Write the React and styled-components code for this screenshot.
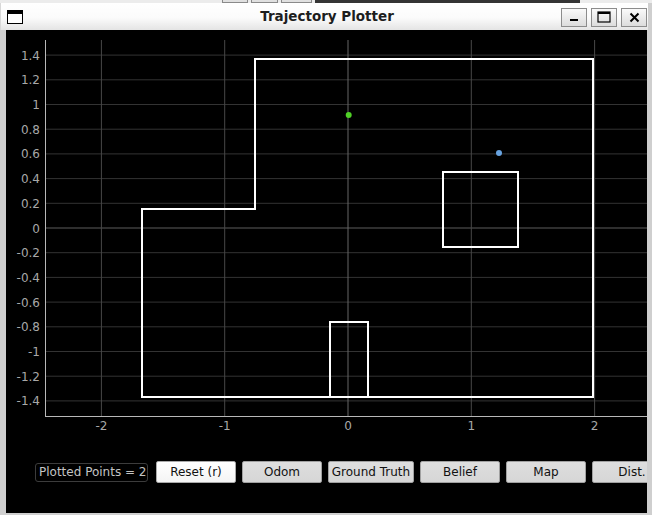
import React from "react";
import styled, { createGlobalStyle } from "styled-components";

const GlobalStyle = createGlobalStyle`
  html, body {
    margin: 0;
    padding: 0;
    background: #cfcfcf;
  }
  body {
    font-family: "DejaVu Sans", "Liberation Sans", sans-serif;
  }
`;

const yTicks = [1.4, 1.2, 1, 0.8, 0.6, 0.4, 0.2, 0, -0.2, -0.4, -0.6, -0.8, -1, -1.2, -1.4];
const xTicks = [-2, -1, 0, 1, 2];

const X0 = 348;
const Y0 = 228;
const SX = 123.3;
const SY = 123.5;
const px = (u) => X0 + u * SX;
const py = (v) => Y0 - v * SY;

const fmt = (v) => {
  const r = Math.round(v * 10) / 10;
  return r === 0 ? "0" : String(r);
};

const buttons = [
  { label: "Reset (r)", primary: true },
  { label: "Odom" },
  { label: "Ground Truth", wide: true },
  { label: "Belief" },
  { label: "Map" },
  { label: "Dist." },
];

function Plot() {
  return (
    <PlotSvg width="641" height="410" viewBox="6 30 641 410">
      {yTicks.map((v) => (
        <line
          key={"h" + v}
          x1="45"
          x2="700"
          y1={py(v)}
          y2={py(v)}
          stroke={v === 0 ? "#5c5c5c" : "#333"}
          strokeWidth="1"
        />
      ))}
      {xTicks.map((u) => (
        <line
          key={"v" + u}
          x1={px(u)}
          x2={px(u)}
          y1="40"
          y2="416"
          stroke={u === 0 ? "#666" : "#484848"}
          strokeWidth="1"
        />
      ))}
      <line x1="45.5" x2="45.5" y1="40" y2="416" stroke="#b8b8b8" />
      <line x1="45" x2="700" y1="416.5" y2="416.5" stroke="#b8b8b8" />

      {yTicks.map((v) => (
        <TickText key={"yl" + v} x="40" y={py(v) + 4.5} textAnchor="end">
          {fmt(v)}
        </TickText>
      ))}
      {xTicks.map((u) => (
        <TickText key={"xl" + u} x={px(u)} y="430" textAnchor="middle">
          {u}
        </TickText>
      ))}

      <g fill="none" stroke="#fff" strokeWidth="2">
        <polygon points="142,209 255,209 255,59 593,59 593,397 142,397" />
        <rect x="443" y="172" width="75" height="75" />
        <polyline points="330,397 330,322 368,322 368,397" />
      </g>

      <circle cx="348.7" cy="115" r="3" fill="#4fd026" />
      <circle cx="499" cy="153" r="3" fill="#68a3e0" />
    </PlotSvg>
  );
}

function WindowIcon() {
  return (
    <svg width="16" height="14" viewBox="0 0 16 14">
      <rect x="0.5" y="0.5" width="15" height="13" fill="#fff" stroke="#000" />
      <rect x="0" y="0" width="16" height="4" fill="#000" />
    </svg>
  );
}

export default function App() {
  return (
    <Screen>
      <GlobalStyle />
      <TopStrip>
        <StripGap />
        <StripBox w={26} />
        <StripBox w={27} />
        <StripBox w={31} />
        <StripDark />
      </TopStrip>
      <Window>
        <TitleBar>
          <TitleIcon>
            <WindowIcon />
          </TitleIcon>
          <Title>Trajectory Plotter</Title>
          <TitleButtons>
            <TitleButton>
              <svg width="10" height="10" viewBox="0 0 10 10">
                <rect x="1" y="7" width="8" height="2" fill="#000" />
              </svg>
            </TitleButton>
            <TitleButton>
              <svg width="14" height="12" viewBox="0 0 14 12">
                <rect x="1" y="1" width="12" height="10" fill="none" stroke="#000" strokeWidth="1.2" />
                <rect x="1" y="1" width="12" height="2" fill="#000" />
              </svg>
            </TitleButton>
            <TitleButton>
              <svg width="11" height="11" viewBox="0 0 11 11">
                <path d="M1.5 1.5 L9.5 9.5 M9.5 1.5 L1.5 9.5" stroke="#000" strokeWidth="2" />
              </svg>
            </TitleButton>
          </TitleButtons>
        </TitleBar>
        <Body>
          <Plot />
          <Controls>
            <CountLabel>Plotted Points = 2</CountLabel>
            {buttons.map((b) => (
              <Button key={b.label} primary={b.primary} wide={b.wide}>
                {b.label}
              </Button>
            ))}
          </Controls>
        </Body>
      </Window>
    </Screen>
  );
}

const Screen = styled.div`
  width: 652px;
  height: 515px;
  overflow: hidden;
  display: flex;
  flex-direction: column;
  background: #cfcfcf;
`;

const TopStrip = styled.div`
  height: 3px;
  display: flex;
  background: #ececec;
  overflow: hidden;
`;

const StripGap = styled.div`
  width: 222px;
  flex-shrink: 0;
`;

const StripBox = styled.div`
  width: ${(p) => p.w}px;
  margin-right: 3px;
  flex-shrink: 0;
  border: 1px solid #8a8a8a;
  border-top: none;
  box-sizing: border-box;
  background: #e0e0e0;
`;

const StripDark = styled.div`
  width: 265px;
  margin-left: 0;
  background: #353535;
  flex-shrink: 0;
`;

const Window = styled.div`
  flex: 1;
  display: flex;
  flex-direction: column;
  min-height: 0;
`;

const TitleBar = styled.div`
  height: 27px;
  flex-shrink: 0;
  display: flex;
  align-items: center;
  margin-right: 4px;
  background: linear-gradient(#ffffff 0%, #fbfbfb 55%, #e4e4e4 100%);
  border-left: 1px solid #d8d8d8;
  box-sizing: border-box;
`;

const TitleIcon = styled.div`
  width: 16px;
  height: 14px;
  margin-left: 6px;
  margin-top: 1px;
  display: flex;
`;

const Title = styled.div`
  flex: 1;
  text-align: center;
  font-family: "DejaVu Sans", sans-serif;
  font-weight: bold;
  font-size: 13.5px;
  color: #1e1e1e;
  margin-left: 70px;
  margin-top: -1px;
`;

const TitleButtons = styled.div`
  display: flex;
  gap: 4px;
  margin-right: 1px;
  margin-top: 1px;
`;

const TitleButton = styled.div`
  width: 26px;
  height: 19px;
  box-sizing: border-box;
  border: 1px solid #8c8c8c;
  background: linear-gradient(#fafafa, #dcdcdc);
  display: flex;
  align-items: center;
  justify-content: center;
`;

const Body = styled.div`
  flex: 1;
  min-height: 0;
  margin: 0 5px 2px 6px;
  background: #000;
  overflow: hidden;
  display: flex;
  flex-direction: column;
`;

const PlotSvg = styled.svg`
  display: block;
  flex-shrink: 0;
  overflow: hidden;
`;

const TickText = styled.text`
  font-family: "DejaVu Sans", sans-serif;
  font-size: 12px;
  fill: #a8a8a8;
`;

const Controls = styled.div`
  display: flex;
  align-items: center;
  gap: 6px;
  padding: 21px 0 0 29px;
  white-space: nowrap;
`;

const CountLabel = styled.div`
  flex-shrink: 0;
  height: 19px;
  box-sizing: border-box;
  padding: 0 3px;
  margin-right: 2px;
  border: 1px solid #3c3c3c;
  border-radius: 3px;
  color: #c4c4c4;
  font-size: 12px;
  line-height: 17px;
  display: flex;
  align-items: center;
  width: 113px;
`;

const Button = styled.div`
  flex-shrink: 0;
  width: ${(p) => (p.wide ? 86 : 80)}px;
  height: 22px;
  box-sizing: border-box;
  border: 1px solid ${(p) => (p.primary ? "#a9a9a9" : "#a0a0a0")};
  border-radius: 2px;
  background: ${(p) =>
    p.primary ? "linear-gradient(#ffffff, #f4f4f4)" : "linear-gradient(#dedede, #d6d6d6)"};
  color: #111;
  font-size: 12px;
  display: flex;
  align-items: center;
  justify-content: center;
`;
